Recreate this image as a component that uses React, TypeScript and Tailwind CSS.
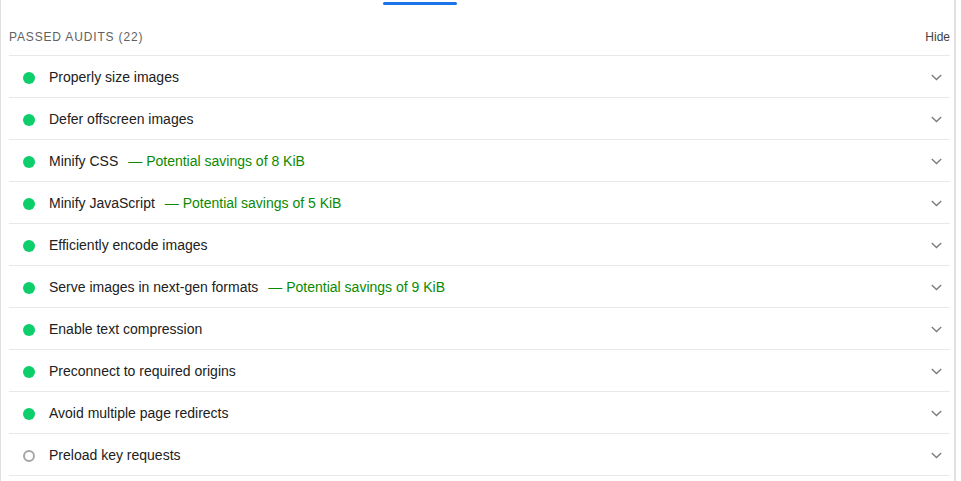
import React from "react";

type Audit = { title: string; savings?: string; pass: boolean };

const audits: Audit[] = [
  { title: "Properly size images", pass: true },
  { title: "Defer offscreen images", pass: true },
  { title: "Minify CSS", savings: "Potential savings of 8 KiB", pass: true },
  { title: "Minify JavaScript", savings: "Potential savings of 5 KiB", pass: true },
  { title: "Efficiently encode images", pass: true },
  { title: "Serve images in next-gen formats", savings: "Potential savings of 9 KiB", pass: true },
  { title: "Enable text compression", pass: true },
  { title: "Preconnect to required origins", pass: true },
  { title: "Avoid multiple page redirects", pass: true },
  { title: "Preload key requests", pass: false },
];

function Chevron() {
  return (
    <svg width="11" height="7" viewBox="0 0 11 7" fill="none">
      <path d="M0.8 1 L5.5 5.5 L10.2 1" stroke="#7a7a7a" strokeWidth="1.3" />
    </svg>
  );
}

export default function App() {
  return (
    <div
      className="w-[956px] h-[481px] bg-white border-l border-r-2 border-[#e0e0e0] overflow-hidden"
      style={{ fontFamily: '"Liberation Sans", Arial, sans-serif' }}
    >
      <div className="h-[17px] pt-[2px] pl-[382px]">
        <div className="w-[74px] h-[3px] rounded-[2px] bg-[#1a73e8]" />
      </div>
      <div className="ml-[8px] mr-[4px]">
        <div className="h-[39px] pt-[2px] flex items-center justify-between border-b border-[#e8e8e8]">
          <span className="text-[12px] tracking-[0.07em] text-[#616161]">PASSED AUDITS (22)</span>
          <span className="text-[12px] text-[#424242]">Hide</span>
        </div>
        {audits.map((a) => (
          <div key={a.title} className="h-[42px] pt-[2px] flex items-center border-b border-[#e8e8e8]">
            <div className="w-[40px] flex justify-center">
              {a.pass ? (
                <div className="w-[12px] h-[12px] rounded-full bg-[#0cce6b]" />
              ) : (
                <div className="w-[12px] h-[12px] rounded-full border-2 border-[#a6a6a6]" />
              )}
            </div>
            <div className="flex-1 text-[14px] text-[#212121]">
              {a.title}
              {a.savings && (
                <span className="ml-[10px] text-[#0b8a00]">— {a.savings}</span>
              )}
            </div>
            <div className="w-[28px] flex justify-center pl-[1px]">
              <Chevron />
            </div>
          </div>
        ))}
      </div>
    </div>
  );
}
